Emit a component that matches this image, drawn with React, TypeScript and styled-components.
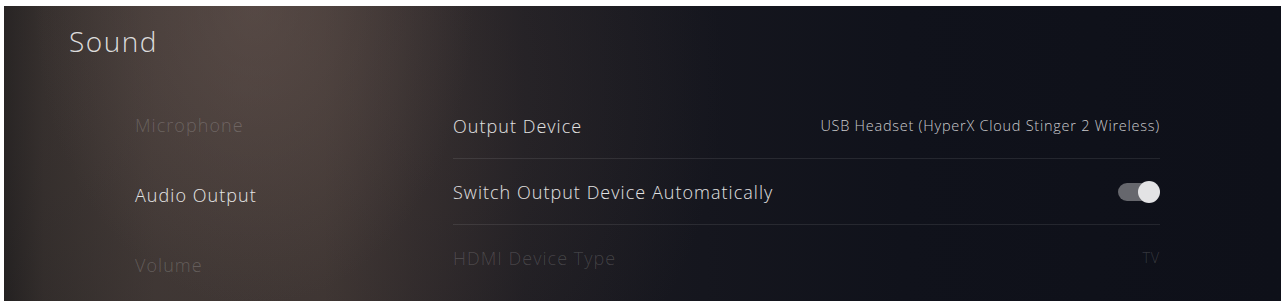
import React from "react";
import styled, { createGlobalStyle } from "styled-components";

const Global = createGlobalStyle`
  html, body { margin: 0; padding: 0; background: #ffffff; }
  body { font-family: "Open Sans", "Noto Sans", sans-serif; }
`;

const Panel = styled.div`
  margin: 6px 0 0 4px;
  width: 1277px;
  height: 295px;
  box-sizing: border-box;
  display: flex;
  flex-direction: column;
  overflow: hidden;
  background:
    radial-gradient(ellipse 220px 300px at 250px 0px, rgba(112, 94, 88, 0.42), rgba(112, 94, 88, 0) 100%),
    radial-gradient(ellipse 480px 460px at 240px 80px, rgba(78, 66, 62, 0.5), rgba(78, 66, 62, 0) 100%),
    linear-gradient(90deg, #1c1b1c 0px, #2c2827 40px, #3a3331 150px, #3a3230 320px, #2b2628 410px, #1c1b21 520px, #15161e 700px, #10121b 900px, #0e1019 1277px);
`;

const Title = styled.h1`
  margin: 0;
  padding: 17px 0 0 65px;
  height: 65px;
  box-sizing: border-box;
  font-weight: 300;
  font-size: 28px;
  line-height: 36px;
  color: #dcdcdc;
  letter-spacing: 1.5px;
`;

const Content = styled.div`
  display: flex;
  flex: 1;
`;

const Sidebar = styled.nav`
  width: 449px;
  flex-shrink: 0;
  padding: 19px 0 0 131px;
  box-sizing: border-box;
  display: flex;
  flex-direction: column;
`;

const NavItem = styled.div<{ $active?: boolean }>`
  height: 70px;
  display: flex;
  align-items: center;
  font-size: 18px;
  font-weight: 300;
  letter-spacing: 1.05px;
  color: ${(p) => (p.$active ? "#e6e6e6" : "rgba(255, 255, 255, 0.19)")};
`;

const List = styled.div`
  width: 707px;
  padding-top: 22px;
  display: flex;
  flex-direction: column;
`;

const Row = styled.div<{ $last?: boolean }>`
  height: 65px;
  display: flex;
  align-items: center;
  justify-content: space-between;
  border-bottom: ${(p) => (p.$last ? "none" : "1px solid rgba(255, 255, 255, 0.09)")};
`;

const Label = styled.span<{ $dim?: boolean }>`
  font-size: 18px;
  font-weight: 300;
  letter-spacing: 1.03px;
  color: ${(p) => (p.$dim ? "rgba(255, 255, 255, 0.16)" : "#e2e2e2")};
`;

const Value = styled.span<{ $dim?: boolean }>`
  font-size: 14.5px;
  font-weight: 300;
  letter-spacing: 0.75px;
  color: ${(p) => (p.$dim ? "rgba(255, 255, 255, 0.17)" : "#cacacd")};
`;

const Toggle = styled.div`
  position: relative;
  width: 41px;
  height: 18px;
  margin-right: 1px;
  border-radius: 9px;
  background: #66676d;
`;

const Knob = styled.div`
  position: absolute;
  right: -1px;
  top: -2px;
  width: 22px;
  height: 22px;
  border-radius: 50%;
  background: #e3e3e5;
`;

export default function App() {
  return (
    <>
      <Global />
      <Panel>
        <Title>Sound</Title>
        <Content>
          <Sidebar>
            <NavItem>Microphone</NavItem>
            <NavItem $active>Audio Output</NavItem>
            <NavItem>Volume</NavItem>
          </Sidebar>
          <List>
            <Row>
              <Label>Output Device</Label>
              <Value>USB Headset (HyperX Cloud Stinger 2 Wireless)</Value>
            </Row>
            <Row>
              <Label>Switch Output Device Automatically</Label>
              <Toggle>
                <Knob />
              </Toggle>
            </Row>
            <Row $last>
              <Label $dim>HDMI Device Type</Label>
              <Value $dim>TV</Value>
            </Row>
          </List>
        </Content>
      </Panel>
    </>
  );
}
